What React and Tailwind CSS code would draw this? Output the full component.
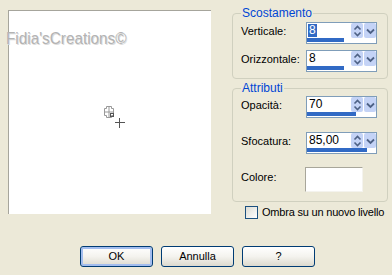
import React from 'react';

const SpinButtons = () => (
    <div className="flex h-full">
        <div className="w-[12px] h-full bg-[#c4d3f6] rounded-[2px] flex items-center justify-center">
            <svg width="9" height="12" viewBox="0 0 9 12">
                <path d="M1.5 4.5 L4.5 1.5 L7.5 4.5" fill="none" stroke="#4d6185" strokeWidth="1.6" />
                <path d="M1.5 7.5 L4.5 10.5 L7.5 7.5" fill="none" stroke="#4d6185" strokeWidth="1.6" />
            </svg>
        </div>
        <div className="w-[12px] h-full ml-px bg-[#c4d3f6] rounded-[2px] flex items-center justify-center">
            <svg width="9" height="8" viewBox="0 0 9 8">
                <path d="M1 2.5 L4.5 6 L8 2.5" fill="none" stroke="#4d6185" strokeWidth="1.8" />
            </svg>
        </div>
    </div>
);

const SpinField = ({ value, bar, selected }) => (
    <div className="w-[71px] h-[22px] border border-[#7f9db9] bg-white flex flex-col">
        <div className="flex h-[15px] items-stretch">
            <div className="flex-1 pl-[1px] flex items-center">
                <span className={`leading-[13px] text-[12px] px-px ${selected ? 'bg-[#316ac5] text-white' : ''}`}>{value}</span>
            </div>
            <SpinButtons />
        </div>
        <div className="h-[4px]">
            <div className="h-full bg-[#316ac5]" style={{ width: bar }} />
        </div>
    </div>
);

const Row = ({ label, children }) => (
    <div className="flex items-start">
        <div className="w-[65px] leading-[14px] pt-[2px]">{label}</div>
        {children}
    </div>
);

const XpButton = ({ children, primary }) => (
    <button
        className={`w-[73px] h-[21px] border border-[#003c74] rounded-[3px] bg-gradient-to-b from-white via-[#f4f3ee] to-[#dcd9ce] text-[11px] leading-none
            ${primary ? 'shadow-[inset_0_0_0_2px_#a3bdee]' : ''}`}
    >
        {children}
    </button>
);

const App = () => {
    return (
        <div className="relative w-[392px] h-[275px] bg-[#ece9d8] flex flex-col font-['Liberation_Sans',Arial,sans-serif] text-[11px] text-black overflow-hidden">
            <div className="flex items-start">
                {/* Preview */}
                <div className="relative ml-[8px] mt-[10px] w-[203px] h-[204px] bg-white border-t border-l border-[#a6a59c]">
                    <svg className="absolute left-[94px] top-[95px]" width="24" height="22" viewBox="0 0 24 22">
                        <g fill="none" stroke="#999" strokeWidth="1">
                            <path d="M3.5 0.5 H8.5 V2.5 H10.5 V9.5 H8.5 V11.5 H3.5 V9.5 H1.5 V2.5 H3.5 Z" />
                            <path d="M1.5 6 H10.5 M6 0.5 V11.5" />
                        </g>
                        <rect x="7.5" y="7.5" width="3" height="3" fill="none" stroke="#555" strokeWidth="1" />
                        <path d="M16.5 12 V22 M12 16.5 H22" stroke="#555" strokeWidth="1" />
                    </svg>
                </div>

                {/* Right column */}
                <div className="ml-[21px] w-[156px] flex flex-col">
                    <fieldset className="mt-[6px] border border-[#d0d0bf] rounded-[4px] pl-[8px] pr-[10px] pt-[2px] pb-[6px] flex flex-col gap-[6px]">
                        <legend className="px-px text-[12px] leading-[14px] text-[#0046d5]">Scostamento</legend>
                        <Row label="Verticale:">
                            <SpinField value="8" bar="37px" selected />
                        </Row>
                        <Row label="Orizzontale:">
                            <SpinField value="8" bar="37px" />
                        </Row>
                    </fieldset>

                    <fieldset className="mt-[2px] border border-[#d0d0bf] rounded-[4px] pl-[8px] pr-[10px] pt-[1px] pb-[9px] flex flex-col">
                        <legend className="px-px text-[12px] leading-[14px] text-[#0046d5]">Attributi</legend>
                        <Row label="Opacità:">
                            <SpinField value="70" bar="49px" />
                        </Row>
                        <div className="mt-[14px]">
                            <Row label="Sfocatura:">
                                <SpinField value="85,00" bar="60px" />
                            </Row>
                        </div>
                        <div className="mt-[13px] flex items-start">
                            <div className="w-[64px] leading-[14px] pt-[3px]">Colore:</div>
                            <div className="w-[58px] h-[25px] bg-white border-t border-l border-[#a8a69a] border-r border-b border-r-[#f4f3ee] border-b-[#f4f3ee]" />
                        </div>
                    </fieldset>

                    <label className="mt-[3px] ml-[13px] flex items-center gap-[4px] whitespace-nowrap">
                        <span className="shrink-0 w-[13px] h-[13px] border border-[#1c5180] bg-gradient-to-br from-[#dcdcd4] to-white" />
                        <span className="leading-[14px] tracking-[-0.2px]">Ombra su un nuovo livello</span>
                    </label>
                </div>
            </div>

            {/* Buttons */}
            <div className="mt-auto mb-[8px] pl-[80px] flex gap-[8px]">
                <XpButton primary>OK</XpButton>
                <XpButton>Annulla</XpButton>
                <XpButton>?</XpButton>
            </div>

            {/* Watermark */}
            <div className="absolute left-[6px] top-[30px] text-[17px] leading-[18px] text-[#b3b3b3] origin-left scale-x-[0.9] [text-shadow:1px_1px_0_#dcdcdc]">
                Fidia'sCreations©
            </div>
        </div>
    );
};

export default App;
